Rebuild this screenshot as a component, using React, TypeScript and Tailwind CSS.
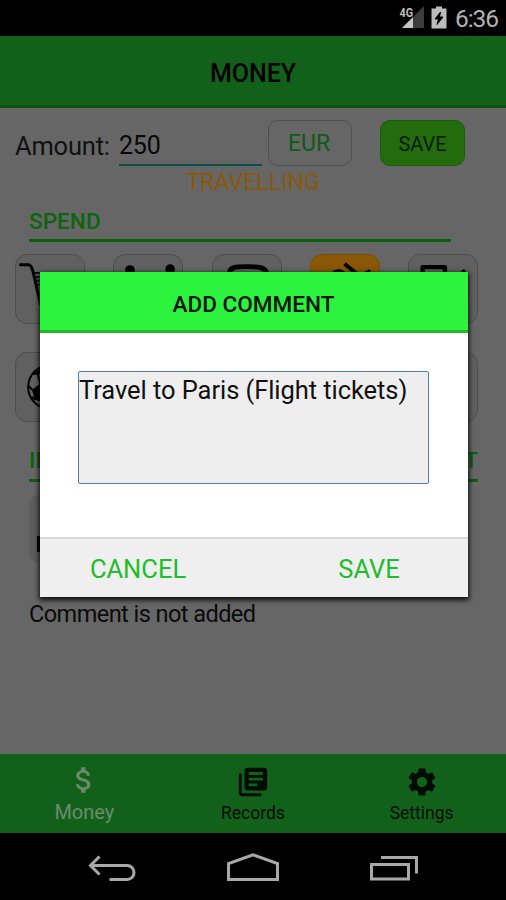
import React, { useState } from 'react';
import { MdAttachMoney, MdLibraryBooks, MdSettings } from 'react-icons/md';
import clsx from 'clsx';

interface Category {
  id: string;
  icon: React.ReactNode;
}

const CartIcon = () => (
  <svg viewBox="0 0 70 70" className="w-full h-full" fill="none" stroke="black" strokeWidth="3" strokeLinecap="round">
    <path d="M4.500 10H12.500C16 10 16 13 17.500 17L25 50H58" />
    <path d="M18 18.500H62L54 40H25M20 22.500H60M21 26.500H59M22 30.500H57" strokeWidth="1.800" />
  </svg>
);

const PeopleIcon = () => (
  <svg viewBox="0 0 70 70" className="w-full h-full" fill="black">
    <circle cx="16.500" cy="15.500" r="5" />
    <circle cx="57.800" cy="14.500" r="5" />
    <path d="M12 23H21V58H12ZM53 23H62V58H53Z" />
  </svg>
);

const PhoneIcon = () => (
  <svg viewBox="0 0 70 70" className="w-full h-full" fill="none" stroke="black">
    <path d="M17 18C17.500 12.500 23 12 35 12S53.500 12.500 55 18" strokeWidth="5" strokeLinecap="round" />
    <path d="M18 56V40L28 26H44L54 40V56Z" strokeWidth="4" />
  </svg>
);

const PlaneIcon = () => (
  <svg viewBox="0 0 70 70" className="w-full h-full" fill="none" stroke="black">
    <path d="M34.500 9L48 20L40 46" strokeWidth="4" />
    <path d="M23 18C27 15 32 15 37 22M56 18L61 16" strokeWidth="3" />
  </svg>
);

const FuelIcon = () => (
  <svg viewBox="0 0 70 70" className="w-full h-full" fill="none" stroke="black">
    <path d="M14 58V12.500H37V58Z" strokeWidth="4.500" strokeLinejoin="round" />
    <path d="M55 15.500L59 21V48" strokeWidth="4" />
  </svg>
);

const BallIcon = () => (
  <svg viewBox="0 0 70 70" className="w-full h-full" fill="none" stroke="black">
    <circle cx="35" cy="35" r="22.500" strokeWidth="2" />
    <path d="M17 38L25 32L32 40L28 50L20 48ZM18 22L28 14L25 21Z" fill="black" />
    <path d="M13 34L17 38M25 32L22 20M16 45L20 48" strokeWidth="2" />
  </svg>
);

const spendCategories: Category[] = [
  { id: 'shopping', icon: <CartIcon /> },
  { id: 'family', icon: <PeopleIcon /> },
  { id: 'phone', icon: <PhoneIcon /> },
  { id: 'travelling', icon: <PlaneIcon /> },
  { id: 'car', icon: <FuelIcon /> },
  { id: 'sport', icon: <BallIcon /> },
  { id: 'home', icon: null },
  { id: 'health', icon: null },
  { id: 'gifts', icon: null },
  { id: 'other', icon: null },
];

const tabs = [
  { id: 'Money', icon: MdAttachMoney },
  { id: 'Records', icon: MdLibraryBooks },
  { id: 'Settings', icon: MdSettings },
];

const StatusBar = () => (
  <div className="h-9 shrink-0 bg-black flex items-center justify-end pr-2">
    <svg width="26" height="24" viewBox="0 0 26 24" className="mr-[6px] -mt-[3px]">
      <path d="M25 1V23H3Z" fill="#3c3c3c" />
      <path d="M14 12V23H3Z" fill="#c4c4c4" />
      <rect x="0" y="0" width="14" height="12" fill="black" />
      <text x="0.500" y="12" fontSize="13.500" fontWeight="700" fontFamily="Roboto, sans-serif" fill="#bcbcbc" textLength="13.500" lengthAdjust="spacingAndGlyphs">4G</text>
    </svg>
    <svg width="16" height="23" viewBox="0 0 16 23" className="mr-[8px] -mt-[2px]">
      <path d="M5 0.500H11V2.500H15.500V22.500H0.500V2.500H5Z" fill="#bcbcbc" />
      <path d="M9.500 6L4 13H7.500L6 18.500L12 11H8.500Z" fill="black" stroke="black" />
    </svg>
    <span className="text-[24.500px] leading-none text-[#b4b4b4] w-[43px] whitespace-nowrap tracking-[-1.100px] pt-[3px]">6:36</span>
  </div>
);

const SystemNav = () => (
  <div className="h-[67px] shrink-0 bg-black flex items-center pt-[3px] pl-[41px] pr-[41px]">
    <div className="flex-1 flex justify-center">
      <svg width="48" height="28" viewBox="0 0 48 28" fill="none" stroke="#a8a8a8" strokeWidth="3">
        <path d="M11.500 2.500L2.500 11.500L11.500 20.500M3 11.500H39A6.500 6.500 0 0 1 39 25.500H21.500" />
      </svg>
    </div>
    <div className="flex-1 flex justify-center">
      <svg width="54" height="30" viewBox="0 0 54 30" fill="none" stroke="#a8a8a8" strokeWidth="3">
        <path d="M2.500 26.500V10.500L27 1.800L51.500 10.500V26.500Z" />
      </svg>
    </div>
    <div className="flex-1 flex justify-center">
      <svg width="50" height="26" viewBox="0 0 50 26" fill="none" stroke="#a8a8a8" strokeWidth="3">
        <path d="M2.500 9.500H39.500V24H2.500ZM12 2.500H47.500V18.500" />
      </svg>
    </div>
  </div>
);

const App = () => {
  const [amount, setAmount] = useState('250');
  const [selected, setSelected] = useState('travelling');
  const [activeTab, setActiveTab] = useState('Money');
  const [showDialog, setShowDialog] = useState(true);
  const [comment, setComment] = useState('Travel to Paris (Flight tickets)');

  return (
    <div className="relative w-full h-[900px] overflow-hidden flex flex-col bg-[#666666] font-[Roboto,sans-serif] text-black">
      <StatusBar />

      <header className="h-[72px] shrink-0 bg-[#12611a] border-b-3 border-[#0c5012] flex items-center justify-center">
        <h1 className="text-[25px] font-medium leading-none pt-[6px]">MONEY</h1>
      </header>

      <main className="flex-1 min-h-0 pt-3">
        <div className="flex items-start h-[46px] pl-[15px]">
          <label className="w-[104px] text-[25.500px] tracking-[-0.200px] leading-[52px] text-[#111111]">Amount:</label>
          <input
            value={amount}
            onChange={(e) => setAmount(e.target.value)}
            className="w-[143px] h-[46px] pt-[6px] text-[25px] tracking-[-0.200px] text-[#080808] bg-transparent border-b-2 border-[#0b514a] outline-none"
          />
          <button className="ml-[6px] w-[84px] h-[46px] pt-[3px] pr-[2px] rounded-[10px] border border-[#505050] text-[#0c5d16] text-[23px]">EUR</button>
          <button className="ml-[28px] w-[85px] h-[46px] pt-[2px] rounded-[10px] border border-[#185c0c] bg-[#236b0c] text-[#061c03] text-[20px]">SAVE</button>
        </div>

        <p className="h-[33px] text-center text-[23.500px] tracking-[-0.200px] leading-[33px] text-[#8a590a]">TRAVELLING</p>

        <div className="ml-[29px] w-[422px] h-[43px] border-b-3 border-[#0d6010]">
          <h2 className="text-[22.600px] leading-[45px] font-medium text-[#0d6411]">SPEND</h2>
        </div>

        <div className="mt-3 ml-[15px] w-[463px] grid grid-cols-[repeat(5,70px)] justify-between gap-y-7">
          {spendCategories.map((category) => (
            <button
              key={category.id}
              onClick={() => setSelected(category.id)}
              className={clsx(
                'w-[70px] h-[70px] rounded-[12px] border overflow-hidden',
                selected === category.id ? 'bg-[#895706] border-[#7a5008]' : 'bg-[#606060] border-[#4e4e4e]'
              )}
            >
              {category.icon}
            </button>
          ))}
        </div>

        <div className="mt-[17px] ml-[29px] w-[449px] flex justify-between">
          <div className="w-[210px] h-[43px] border-b-3 border-[#0d6010]">
            <h2 className="text-[22.600px] leading-[44px] font-medium text-[#0d6010]">INCOME</h2>
          </div>
          <div className="w-[210px] h-[43px] border-b-3 border-[#0d6010] text-right">
            <h2 className="text-[22.600px] leading-[44px] font-medium text-[#0d6010]">DEBT</h2>
          </div>
        </div>

        <div className="mt-3 ml-[29px] w-[70px] h-[70px] rounded-[12px] bg-[#5d5d5d]">
          <svg viewBox="0 0 70 70" className="w-full h-full">
            <path d="M8 42H62V58H8Z" fill="black" />
          </svg>
        </div>

        <p className="mt-[32px] ml-[29px] text-[23.500px] tracking-[-0.550px] leading-9 text-[#0b0b0b]">Comment is not added</p>
      </main>

      <nav className="h-[79px] shrink-0 bg-[#12611a] grid grid-cols-3">
        {tabs.map((tab) => (
          <button
            key={tab.id}
            onClick={() => setActiveTab(tab.id)}
            className={clsx(
              'flex flex-col items-center pt-[11px]',
              activeTab === tab.id ? 'text-[#6c8a6e] text-[20px]' : 'text-[#020c03] text-[17.500px]'
            )}
          >
            <tab.icon size={34} className={activeTab === tab.id ? '-mt-[2px] mb-px' : ''} />
            <span className="leading-7">{tab.id}</span>
          </button>
        ))}
      </nav>

      <SystemNav />

      {/* --- COMMENT DIALOG --- */}
      {showDialog && (
        <div className="absolute left-[39.500px] top-[272px] w-[428px] h-[325px] flex flex-col bg-white shadow-[0_2px_5px_1px_rgba(0,0,0,0.9)]">
          <div className="h-[61px] bg-[#2cf33e] border-b-3 border-[#20b92c] flex items-center justify-center">
            <h2 className="text-[22.600px] font-medium leading-none pt-[8px] text-[#03140a]">ADD COMMENT</h2>
          </div>
          <div className="flex-1 pt-[38px] pl-[38.500px]">
            <textarea
              value={comment}
              onChange={(e) => setComment(e.target.value)}
              className="block w-[351px] h-[113px] resize-none rounded-[2px] border-[1.500px] border-[#557ead] bg-[#eeeeee] text-[25.500px] tracking-[-0.060px] leading-9 text-[#111111] outline-none"
            />
          </div>
          <div className="h-[60px] border-t-2 border-[#d8d8d8] bg-[#efefef] grid grid-cols-[197px_1fr] text-[25.500px] text-[#20bd2c]">
            <button onClick={() => setShowDialog(false)} className="pt-0.5">CANCEL</button>
            <button onClick={() => setShowDialog(false)} className="pt-0.5 pl-[34px]">SAVE</button>
          </div>
        </div>
      )}
    </div>
  );
};

export default App;
